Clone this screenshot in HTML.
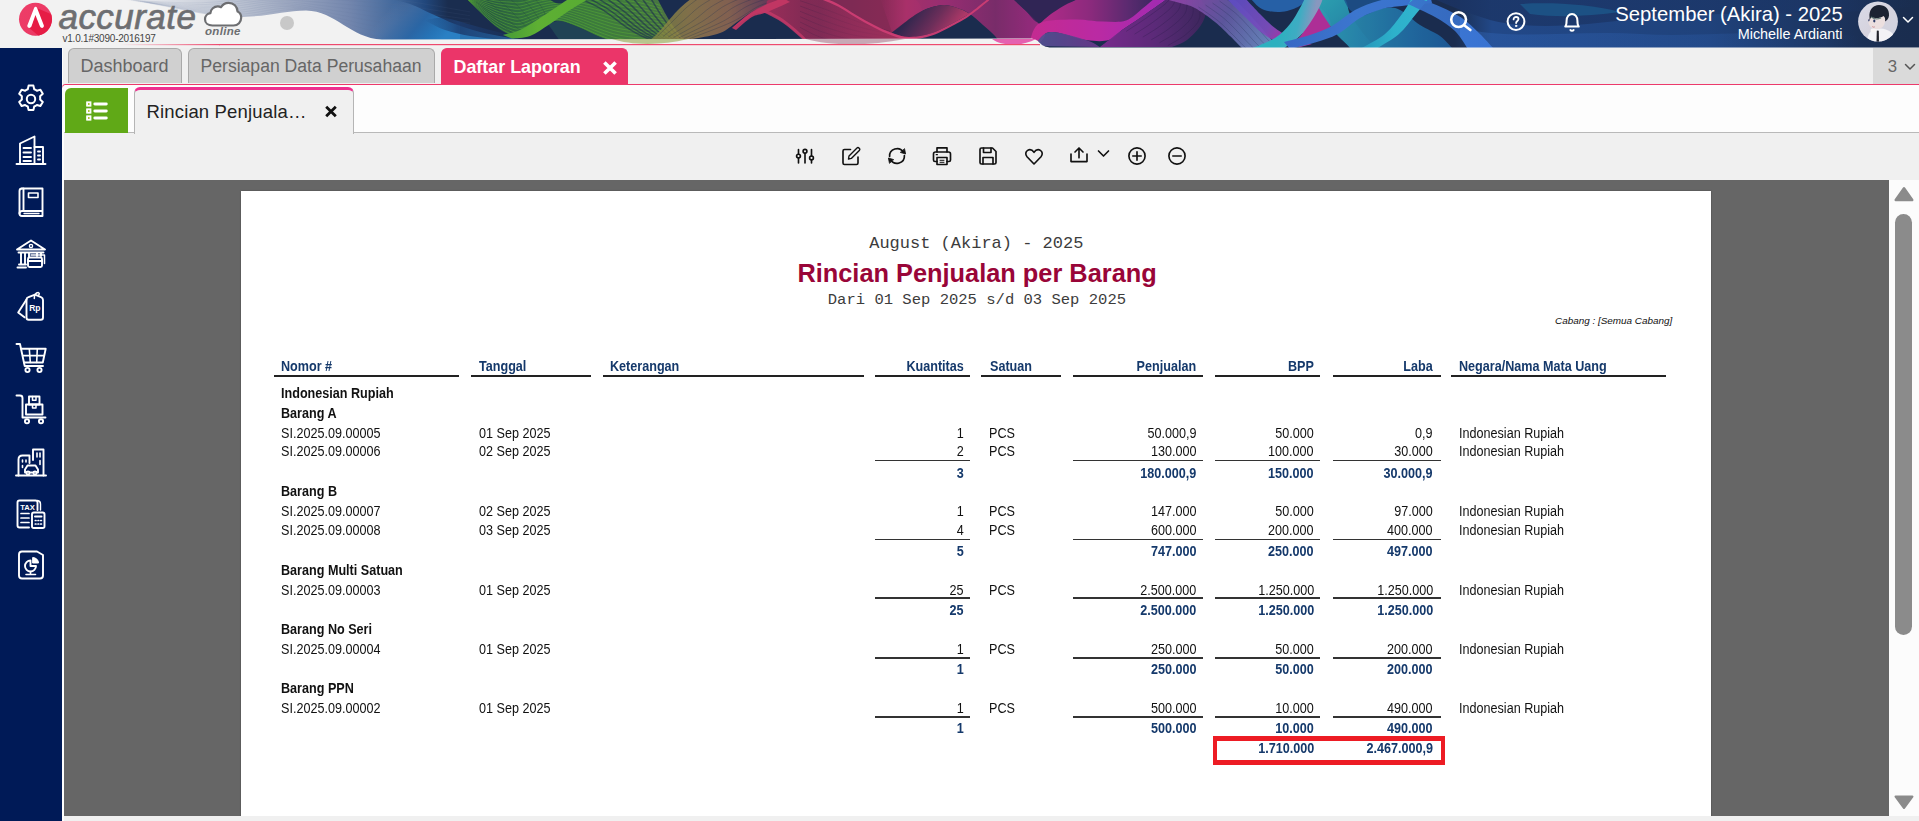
<!DOCTYPE html>
<html lang="id">
<head>
<meta charset="utf-8">
<title>Accurate Online - Rincian Penjualan per Barang</title>
<style>
*{box-sizing:border-box;margin:0;padding:0}
html,body{width:1919px;height:821px;overflow:hidden;background:#f0f0f0;font-family:"Liberation Sans",sans-serif}
.abs{position:absolute}
#hdr{position:absolute;left:0;top:0;width:1919px;height:48px;background:#f0f0f0;overflow:hidden}
#side{position:absolute;left:0;top:48px;width:62px;height:773px;background:#001a57}
#side svg{position:absolute;left:15px;width:32px;height:32px;fill:none;stroke:#fff;stroke-width:1.9;stroke-linecap:round;stroke-linejoin:round}
#tabs{position:absolute;left:63px;top:48px;width:1856px;height:37px;background:#f0f0f0}
.tab{position:absolute;top:0;height:35px;border:1px solid #a9a9a9;border-bottom:none;border-radius:6px 6px 0 0;background:#d0d0d0;color:#666;font-size:18px;line-height:35px;white-space:nowrap}
.tab.act{height:36px;line-height:37.200px;background:#eb3569;border-color:#eb3569;color:#fff;font-weight:bold}
#content{position:absolute;left:62px;top:48px;width:1857px;height:773px;background:#fdfdfd}
#pinkline{position:absolute;left:62px;top:84px;width:1857px;height:4px;border-top:1.300px solid #ec3a6b;border-left:1.300px solid #ec3a6b;border-radius:3px 0 0 0;-webkit-mask-image:linear-gradient(#000 30%,transparent);mask-image:linear-gradient(#000 30%,transparent)}
#gbtn{position:absolute;left:64.600px;top:87.700px;width:63.700px;height:44.900px;z-index:2;background:#60a917;border-radius:6px 0 0 0}
#subtab{position:absolute;left:134px;top:87px;width:220px;height:47px;z-index:2;background:#f0f0f0;border:1px solid #b5b5b5;border-bottom:none;border-top:3px solid #ee2f8f;border-radius:6px 6px 0 0;font-size:18.500px;letter-spacing:0.160px;color:#222;white-space:nowrap}
#tool{position:absolute;left:64px;top:132px;width:1855px;height:48px;background:#f0f0f0;border-top:1px solid #b9b9b9}
#tool svg{position:absolute;top:12px;width:22px;height:22px;fill:none;stroke:#111;stroke-width:1.650;stroke-linecap:round;stroke-linejoin:round}
#viewer{position:absolute;left:64px;top:180px;width:1825px;height:636px;background:#666;overflow:hidden}
#page{position:absolute;left:177.400px;top:11.100px;width:1470px;height:700px;background:#fff;box-shadow:0 0 1.500px rgba(0,0,0,.35)}
#sbar{position:absolute;left:1889px;top:180px;width:30px;height:636px;background:#fcfcfc}
#foot{position:absolute;left:64px;top:816px;width:1855px;height:5px;background:#f0f0f0}
#rep{position:absolute;left:0;top:0;width:1919px;height:816px;overflow:hidden;pointer-events:none}
.t{position:absolute;white-space:pre;font-size:14px;line-height:16px;color:#111;transform:scaleX(.9);transform-origin:0 0}
.t.rr{transform-origin:100% 0}
.t.nc{transform:none}
.b{font-weight:bold}
.n{color:#15396b}
.r{text-align:right}
.ln{position:absolute;height:1.4px;background:#222}
</style>
</head>
<body>
<div id="hdr">
<svg id="banner" class="abs" style="left:0;top:0" width="1919" height="48" viewBox="0 0 1919 48"><defs><linearGradient id="g1" gradientUnits="userSpaceOnUse" x1="120" y1="0" x2="448" y2="0"><stop offset="0" stop-color="#f0f0f0"/><stop offset="0.08" stop-color="#e6e8ed"/><stop offset="0.3" stop-color="#c6ccd8"/><stop offset="0.52" stop-color="#9ca7c0"/><stop offset="0.7" stop-color="#7386ad"/><stop offset="0.84" stop-color="#41689c"/><stop offset="0.93" stop-color="#21477c"/><stop offset="1" stop-color="#1a2d4f"/></linearGradient><linearGradient id="g2" gradientUnits="userSpaceOnUse" x1="395" y1="2" x2="440" y2="42"><stop offset="0" stop-color="#5f7fae" stop-opacity="0"/><stop offset="0.3" stop-color="#3f6ea6" stop-opacity="0.8"/><stop offset="0.55" stop-color="#2a68a8" stop-opacity="0.9"/><stop offset="0.8" stop-color="#2676ba" stop-opacity="0.95"/><stop offset="1" stop-color="#2a80c4"/></linearGradient><linearGradient id="g3" gradientUnits="userSpaceOnUse" x1="425" y1="0" x2="535" y2="0"><stop offset="0" stop-color="#1d3f74" stop-opacity="0"/><stop offset="0.3" stop-color="#1d3f74" stop-opacity="0.85"/><stop offset="1" stop-color="#1b3462" stop-opacity="0.2"/></linearGradient><linearGradient id="g4" gradientUnits="userSpaceOnUse" x1="466" y1="0" x2="690" y2="0"><stop offset="0" stop-color="#28603f"/><stop offset="0.28" stop-color="#3b8a38"/><stop offset="0.6" stop-color="#4a9a36"/><stop offset="0.85" stop-color="#56923c"/><stop offset="1" stop-color="#848c42"/></linearGradient><linearGradient id="g5" gradientUnits="userSpaceOnUse" x1="503" y1="0" x2="590" y2="0"><stop offset="0" stop-color="#4fae34"/><stop offset="0.4" stop-color="#69c52f"/><stop offset="1" stop-color="#63c22f"/></linearGradient><linearGradient id="g6" gradientUnits="userSpaceOnUse" x1="645" y1="0" x2="790" y2="0"><stop offset="0" stop-color="#8a9a3a"/><stop offset="0.3" stop-color="#b39248"/><stop offset="0.58" stop-color="#b57a52"/><stop offset="0.82" stop-color="#8a4a5e"/><stop offset="1" stop-color="#a83259"/></linearGradient><linearGradient id="g7" gradientUnits="userSpaceOnUse" x1="732" y1="0" x2="910" y2="0"><stop offset="0" stop-color="#d83462"/><stop offset="0.18" stop-color="#b82f5c"/><stop offset="0.5" stop-color="#8e2a55"/><stop offset="1" stop-color="#a32a58"/></linearGradient><linearGradient id="g8" gradientUnits="userSpaceOnUse" x1="806" y1="0" x2="905" y2="0"><stop offset="0" stop-color="#b2305f" stop-opacity="0"/><stop offset="0.45" stop-color="#b2305f" stop-opacity="0.55"/><stop offset="1" stop-color="#b8325f" stop-opacity="0.95"/></linearGradient><linearGradient id="g9" gradientUnits="userSpaceOnUse" x1="880" y1="0" x2="1045" y2="0"><stop offset="0" stop-color="#c23270" stop-opacity="0"/><stop offset="0.16" stop-color="#c23270"/><stop offset="0.4" stop-color="#b32e7a"/><stop offset="0.7" stop-color="#8e2d70"/><stop offset="1" stop-color="#b82a8c"/></linearGradient><linearGradient id="g10" gradientUnits="userSpaceOnUse" x1="915" y1="8" x2="950" y2="34"><stop offset="0" stop-color="#33264e"/><stop offset="0.55" stop-color="#7a2f5c"/><stop offset="1" stop-color="#c53b6c"/></linearGradient><linearGradient id="g11" gradientUnits="userSpaceOnUse" x1="1040" y1="0" x2="1150" y2="0"><stop offset="0" stop-color="#d62a96"/><stop offset="0.45" stop-color="#a62a88"/><stop offset="0.8" stop-color="#6a2a78"/><stop offset="1" stop-color="#4a2868"/></linearGradient><linearGradient id="g12" gradientUnits="userSpaceOnUse" x1="1030" y1="0" x2="1168" y2="0"><stop offset="0" stop-color="#e02c9c"/><stop offset="0.5" stop-color="#d42ab2"/><stop offset="1" stop-color="#b52cc4"/></linearGradient><linearGradient id="g13" gradientUnits="userSpaceOnUse" x1="1034" y1="0" x2="1100" y2="0"><stop offset="0" stop-color="#5a5aa0"/><stop offset="1" stop-color="#7a3a98"/></linearGradient><linearGradient id="g14" gradientUnits="userSpaceOnUse" x1="1105" y1="0" x2="1205" y2="0"><stop offset="0" stop-color="#8a2a98"/><stop offset="0.5" stop-color="#6a2a82"/><stop offset="1" stop-color="#43265f"/></linearGradient><linearGradient id="g15" gradientUnits="userSpaceOnUse" x1="1180" y1="0" x2="1265" y2="46"><stop offset="0" stop-color="#a04cb8"/><stop offset="0.5" stop-color="#6f62b2"/><stop offset="1" stop-color="#7a9ad6"/></linearGradient><linearGradient id="g16" gradientUnits="userSpaceOnUse" x1="1235" y1="0" x2="1300" y2="44"><stop offset="0" stop-color="#6a52d4"/><stop offset="0.55" stop-color="#8a52cc"/><stop offset="0.85" stop-color="#d232b4"/><stop offset="1" stop-color="#e030ae"/></linearGradient><linearGradient id="g17" gradientUnits="userSpaceOnUse" x1="1325" y1="0" x2="1365" y2="46"><stop offset="0" stop-color="#2fb6c4"/><stop offset="1" stop-color="#2388b6"/></linearGradient><linearGradient id="g18" gradientUnits="userSpaceOnUse" x1="1335" y1="0" x2="1450" y2="0"><stop offset="0" stop-color="#2c9ebc"/><stop offset="0.6" stop-color="#2278b0"/><stop offset="1" stop-color="#1e62a4"/></linearGradient><linearGradient id="g19" gradientUnits="userSpaceOnUse" x1="1280" y1="30" x2="1310" y2="36"><stop offset="0" stop-color="#2fc6d2"/><stop offset="0.55" stop-color="#45c2d6"/><stop offset="1" stop-color="#9aaad2"/></linearGradient><linearGradient id="g20" gradientUnits="userSpaceOnUse" x1="1284" y1="0" x2="1430" y2="0"><stop offset="0" stop-color="#3c72d8"/><stop offset="0.5" stop-color="#4283e4"/><stop offset="1" stop-color="#3c7ce0"/></linearGradient><linearGradient id="g21" gradientUnits="userSpaceOnUse" x1="1360" y1="0" x2="1429" y2="0"><stop offset="0" stop-color="#2aa8cc"/><stop offset="0.5" stop-color="#30c8e0"/><stop offset="1" stop-color="#38cce4"/></linearGradient><linearGradient id="g22" gradientUnits="userSpaceOnUse" x1="1455" y1="0" x2="1919" y2="0"><stop offset="0" stop-color="#244f96" stop-opacity="0"/><stop offset="0.08" stop-color="#244f96" stop-opacity="0.8"/><stop offset="0.55" stop-color="#214888" stop-opacity="0.78"/><stop offset="0.8" stop-color="#1e3c70" stop-opacity="0.55"/><stop offset="1" stop-color="#1a2d4f" stop-opacity="0"/></linearGradient><linearGradient id="g23" gradientUnits="userSpaceOnUse" x1="1440" y1="0" x2="1919" y2="0"><stop offset="0" stop-color="#1b3566" stop-opacity="0.85"/><stop offset="0.7" stop-color="#1b3566" stop-opacity="0.7"/><stop offset="1" stop-color="#1b3566" stop-opacity="0"/></linearGradient><linearGradient id="g24" gradientUnits="userSpaceOnUse" x1="1470" y1="0" x2="1860" y2="0"><stop offset="0" stop-color="#3166b8" stop-opacity="0.4"/><stop offset="0.6" stop-color="#2d5eac" stop-opacity="0.3"/><stop offset="1" stop-color="#2d5eac" stop-opacity="0"/></linearGradient><linearGradient id="g25" gradientUnits="userSpaceOnUse" x1="1408" y1="0" x2="1494" y2="0"><stop offset="0" stop-color="#3f7fe0"/><stop offset="1" stop-color="#3a74d4"/></linearGradient><linearGradient id="g26" gradientUnits="userSpaceOnUse" x1="120" y1="0" x2="220" y2="0"><stop offset="0" stop-color="#ee4a6e" stop-opacity="0"/><stop offset="1" stop-color="#ee4a6e"/></linearGradient></defs>
<rect x="0" y="0" width="1919" height="48" fill="url(#g1)"/>
<path d="M131.1,0.2 C142.9,0.6 180.1,3.4 201.9,2.8 C223.8,2.3 240.7,-2.0 262.2,-3.2 C283.7,-4.4 308.1,-4.7 330.8,-4.1 C353.6,-3.5 375.7,-2.4 398.9,0.3 C422.1,2.9 458.1,10.0 470.0,11.9" fill="none" stroke="#5f6f98" stroke-width="0.6" opacity="0.18"/>
<path d="M133.3,0.5 C145.4,1.2 183.6,4.8 205.8,4.5 C228.1,4.2 245.6,-0.8 266.7,-1.6 C287.8,-2.4 310.8,-1.4 332.5,-0.3 C354.2,0.7 373.8,2.2 396.7,4.8 C419.6,7.5 457.8,13.9 470.0,15.7" fill="none" stroke="#5f6f98" stroke-width="0.6" opacity="0.18"/>
<path d="M135.6,0.8 C147.9,1.7 187.1,6.3 209.7,6.2 C232.3,6.0 250.4,0.5 271.1,0.0 C291.9,-0.4 313.6,1.9 334.2,3.4 C354.7,5.0 371.8,6.7 394.4,9.4 C417.1,12.1 457.4,17.8 470.0,19.4" fill="none" stroke="#5f6f98" stroke-width="0.6" opacity="0.18"/>
<path d="M137.8,1.2 C150.4,2.3 190.6,7.8 213.6,7.8 C236.6,7.9 255.2,1.7 275.6,1.6 C295.9,1.5 316.4,5.2 335.8,7.2 C355.3,9.3 369.9,11.3 392.2,13.9 C414.6,16.6 457.0,21.7 470.0,23.2" fill="none" stroke="#5f6f98" stroke-width="0.6" opacity="0.18"/>
<path d="M140.0,1.5 C152.9,2.8 194.2,9.2 217.5,9.5 C240.8,9.8 260.0,3.0 280.0,3.2 C300.0,3.5 319.2,8.5 337.5,11.0 C355.8,13.5 367.9,15.8 390.0,18.5 C412.1,21.2 456.7,25.6 470.0,27.0" fill="none" stroke="#5f6f98" stroke-width="0.6" opacity="0.18"/>
<path d="M142.2,1.8 C155.4,3.4 197.7,10.7 221.4,11.2 C245.1,11.7 264.8,4.3 284.4,4.9 C304.1,5.5 321.9,11.7 339.2,14.8 C356.4,17.8 366.0,20.4 387.8,23.1 C409.6,25.7 456.3,29.5 470.0,30.8" fill="none" stroke="#5f6f98" stroke-width="0.6" opacity="0.18"/>
<path d="M144.4,2.2 C157.9,3.9 201.2,12.1 225.3,12.8 C249.4,13.6 269.6,5.5 288.9,6.5 C308.1,7.4 324.7,15.0 340.8,18.6 C356.9,22.1 364.0,24.9 385.6,27.6 C407.1,30.3 455.9,33.4 470.0,34.6" fill="none" stroke="#5f6f98" stroke-width="0.6" opacity="0.18"/>
<path d="M146.7,2.5 C160.4,4.5 204.7,13.6 229.2,14.5 C253.6,15.4 274.4,6.8 293.3,8.1 C312.2,9.4 327.5,18.3 342.5,22.3 C357.5,26.3 362.1,29.5 383.3,32.2 C404.6,34.8 455.6,37.3 470.0,38.3" fill="none" stroke="#5f6f98" stroke-width="0.6" opacity="0.18"/>
<path d="M148.9,2.8 C162.9,5.1 208.2,15.0 233.1,16.2 C257.9,17.3 279.3,8.0 297.8,9.7 C316.3,11.4 330.3,21.6 344.2,26.1 C358.1,30.6 360.1,34.1 381.1,36.7 C402.1,39.4 455.2,41.2 470.0,42.1" fill="none" stroke="#5f6f98" stroke-width="0.6" opacity="0.18"/>
<path d="M385,-2 C389.2,-1.0 402.2,1.3 410.0,4.0 C417.8,6.7 424.5,10.7 432.0,14.0 C439.5,17.3 447.0,21.0 455.0,24.0 C463.0,27.0 471.7,29.8 480.0,32.0 C488.3,34.2 498.0,35.8 505.0,37.0 C512.0,38.2 519.2,39.1 522.0,39.5 L522,40.5 C515.0,40.6 493.7,40.9 480.0,41.0 C466.3,41.1 454.7,40.8 440.0,41.0 C425.3,41.2 403.3,43.2 392.0,42.0 C380.7,40.8 379.0,37.7 372.0,34.0 C365.0,30.3 353.7,22.3 350.0,20.0 Z" fill="url(#g2)"/>
<path d="M425,20 C428.3,19.7 437.8,17.3 445.0,18.0 C452.2,18.7 460.5,22.0 468.0,24.0 C475.5,26.0 482.2,28.0 490.0,30.0 C497.8,32.0 507.5,34.4 515.0,36.0 C522.5,37.6 531.7,38.9 535.0,39.5 L535,40.5 C532.5,40.4 525.8,40.2 520.0,40.0 C514.2,39.8 508.3,40.2 500.0,39.5 C491.7,38.8 479.2,37.6 470.0,36.0 C460.8,34.4 452.5,32.6 445.0,30.0 C437.5,27.4 428.3,22.1 425.0,20.5 Z" fill="url(#g3)"/>
<path d="M466,-2 C468.3,0.3 475.2,7.3 480.0,12.0 C484.8,16.7 490.0,22.2 495.0,26.0 C500.0,29.8 505.8,33.2 510.0,35.0 C514.2,36.8 515.8,37.8 520.0,37.0 C524.2,36.2 530.3,32.3 535.0,30.0 C539.7,27.7 543.8,24.5 548.0,23.0 C552.2,21.5 555.0,20.3 560.0,21.0 C565.0,21.7 571.3,24.3 578.0,27.0 C584.7,29.7 593.3,34.3 600.0,37.0 C606.7,39.7 611.3,41.5 618.0,43.0 C624.7,44.5 628.0,45.3 640.0,46.0 C652.0,46.7 681.7,46.8 690.0,47.0 L690,47 C688.3,45.0 683.5,39.5 680.0,35.0 C676.5,30.5 672.8,26.2 669.0,20.0 C665.2,13.8 659.0,1.7 657.0,-2.0 Z" fill="url(#g4)" opacity="0.85"/>
<path d="M466.0,-3.0 C468.3,-3.7 475.2,-6.4 480.0,-7.3 C484.8,-8.3 490.0,-8.3 495.0,-8.8 C500.0,-9.3 505.8,-10.2 510.0,-10.4 C514.2,-10.7 515.8,-10.0 520.0,-10.4 C524.2,-10.7 530.3,-12.1 535.0,-12.5 C539.7,-12.9 543.8,-12.7 548.0,-12.8 C552.2,-12.8 555.0,-13.2 560.0,-12.8 C565.0,-12.5 571.3,-11.4 578.0,-10.7 C584.7,-10.0 593.3,-9.5 600.0,-8.4 C606.7,-7.4 611.3,-5.7 618.0,-4.4 C624.7,-3.0 632.9,-2.0 640.0,-0.4 C647.1,1.2 657.0,4.5 660.4,5.4" fill="none" stroke="#66c62f" stroke-width="0.9" opacity="0.55"/>
<path d="M466.0,-2.9 C468.3,-3.4 475.2,-5.4 480.0,-6.0 C484.8,-6.6 490.0,-6.2 495.0,-6.4 C500.0,-6.6 505.8,-7.2 510.0,-7.3 C514.2,-7.4 515.8,-6.7 520.0,-7.1 C524.2,-7.5 530.3,-9.1 535.0,-9.6 C539.7,-10.1 543.8,-10.1 548.0,-10.3 C552.2,-10.4 555.0,-10.9 560.0,-10.5 C565.0,-10.1 571.3,-9.0 578.0,-8.1 C584.7,-7.2 593.3,-6.5 600.0,-5.3 C606.7,-4.1 611.3,-2.5 618.0,-1.1 C624.7,0.2 632.8,1.2 640.0,2.8 C647.2,4.4 657.7,7.4 661.2,8.3" fill="none" stroke="#66c62f" stroke-width="0.9" opacity="0.55"/>
<path d="M466.0,-2.8 C468.3,-3.1 475.2,-4.5 480.0,-4.7 C484.8,-4.9 490.0,-4.1 495.0,-4.0 C500.0,-3.9 505.8,-4.2 510.0,-4.2 C514.2,-4.1 515.8,-3.4 520.0,-3.8 C524.2,-4.3 530.3,-6.0 535.0,-6.7 C539.7,-7.3 543.8,-7.6 548.0,-7.8 C552.2,-8.1 555.0,-8.6 560.0,-8.2 C565.0,-7.8 571.3,-6.5 578.0,-5.5 C584.7,-4.5 593.3,-3.4 600.0,-2.2 C606.7,-0.9 611.3,0.8 618.0,2.2 C624.7,3.5 632.7,4.5 640.0,6.0 C647.3,7.5 658.3,10.3 662.0,11.2" fill="none" stroke="#66c62f" stroke-width="0.9" opacity="0.55"/>
<path d="M466.0,-2.8 C468.3,-2.9 475.2,-3.5 480.0,-3.3 C484.8,-3.1 490.0,-2.0 495.0,-1.6 C500.0,-1.2 505.8,-1.2 510.0,-1.0 C514.2,-0.9 515.8,-0.1 520.0,-0.6 C524.2,-1.0 530.3,-2.9 535.0,-3.7 C539.7,-4.5 543.8,-5.0 548.0,-5.4 C552.2,-5.7 555.0,-6.2 560.0,-5.8 C565.0,-5.4 571.3,-4.0 578.0,-2.9 C584.7,-1.8 593.3,-0.4 600.0,1.0 C606.7,2.4 611.3,4.1 618.0,5.4 C624.7,6.8 632.5,7.8 640.0,9.2 C647.5,10.6 659.0,13.2 662.8,14.0" fill="none" stroke="#66c62f" stroke-width="0.9" opacity="0.55"/>
<path d="M466.0,-2.7 C468.3,-2.6 475.2,-2.6 480.0,-2.0 C484.8,-1.4 490.0,0.1 495.0,0.8 C500.0,1.5 505.8,1.8 510.0,2.1 C514.2,2.4 515.8,3.2 520.0,2.7 C524.2,2.2 530.3,0.1 535.0,-0.8 C539.7,-1.7 543.8,-2.4 548.0,-2.9 C552.2,-3.3 555.0,-3.9 560.0,-3.5 C565.0,-3.1 571.3,-1.6 578.0,-0.3 C584.7,1.0 593.3,2.6 600.0,4.1 C606.7,5.6 611.3,7.3 618.0,8.7 C624.7,10.1 632.4,11.0 640.0,12.4 C647.6,13.8 659.7,16.1 663.6,16.9" fill="none" stroke="#66c62f" stroke-width="0.9" opacity="0.55"/>
<path d="M466.0,-2.6 C468.3,-2.3 475.2,-1.6 480.0,-0.7 C484.8,0.3 490.0,2.2 495.0,3.2 C500.0,4.2 505.8,4.8 510.0,5.2 C514.2,5.7 515.8,6.5 520.0,6.0 C524.2,5.5 530.3,3.2 535.0,2.1 C539.7,1.1 543.8,0.1 548.0,-0.4 C552.2,-1.0 555.0,-1.6 560.0,-1.2 C565.0,-0.7 571.3,0.9 578.0,2.3 C584.7,3.7 593.3,5.6 600.0,7.2 C606.7,8.8 611.3,10.6 618.0,12.0 C624.7,13.4 632.3,14.3 640.0,15.6 C647.7,16.9 660.3,19.1 664.4,19.8" fill="none" stroke="#66c62f" stroke-width="0.9" opacity="0.55"/>
<path d="M466.0,-2.6 C468.3,-2.0 475.2,-0.7 480.0,0.7 C484.8,2.0 490.0,4.3 495.0,5.6 C500.0,6.9 505.8,7.8 510.0,8.4 C514.2,9.0 515.8,9.8 520.0,9.2 C524.2,8.7 530.3,6.3 535.0,5.1 C539.7,3.9 543.8,2.7 548.0,2.0 C552.2,1.4 555.0,0.7 560.0,1.2 C565.0,1.6 571.3,3.4 578.0,4.9 C584.7,6.4 593.3,8.6 600.0,10.4 C606.7,12.1 611.3,13.8 618.0,15.2 C624.7,16.6 632.1,17.6 640.0,18.8 C647.9,20.0 661.0,22.0 665.2,22.6" fill="none" stroke="#66c62f" stroke-width="0.9" opacity="0.55"/>
<path d="M466.0,-2.5 C468.3,-1.8 475.2,0.2 480.0,2.0 C484.8,3.8 490.0,6.4 495.0,8.0 C500.0,9.6 505.8,10.8 510.0,11.5 C514.2,12.2 515.8,13.1 520.0,12.5 C524.2,11.9 530.3,9.3 535.0,8.0 C539.7,6.7 543.8,5.2 548.0,4.5 C552.2,3.8 555.0,3.0 560.0,3.5 C565.0,4.0 571.3,5.8 578.0,7.5 C584.7,9.2 593.3,11.7 600.0,13.5 C606.7,15.3 611.3,17.1 618.0,18.5 C624.7,19.9 632.0,20.8 640.0,22.0 C648.0,23.2 661.7,24.9 666.0,25.5" fill="none" stroke="#66c62f" stroke-width="0.9" opacity="0.55"/>
<path d="M466.0,-2.4 C468.3,-1.5 475.2,1.2 480.0,3.3 C484.8,5.5 490.0,8.5 495.0,10.4 C500.0,12.3 505.8,13.7 510.0,14.6 C514.2,15.5 515.8,16.4 520.0,15.8 C524.2,15.1 530.3,12.4 535.0,10.9 C539.7,9.5 543.8,7.8 548.0,7.0 C552.2,6.1 555.0,5.3 560.0,5.8 C565.0,6.4 571.3,8.3 578.0,10.1 C584.7,11.9 593.3,14.7 600.0,16.6 C606.7,18.6 611.3,20.3 618.0,21.8 C624.7,23.2 631.9,24.1 640.0,25.2 C648.1,26.3 662.3,27.8 666.8,28.4" fill="none" stroke="#66c62f" stroke-width="0.9" opacity="0.55"/>
<path d="M466.0,-2.4 C468.3,-1.2 475.2,2.1 480.0,4.7 C484.8,7.2 490.0,10.6 495.0,12.8 C500.0,15.0 505.8,16.7 510.0,17.8 C514.2,18.8 515.8,19.7 520.0,19.0 C524.2,18.4 530.3,15.5 535.0,13.9 C539.7,12.3 543.8,10.4 548.0,9.4 C552.2,8.5 555.0,7.6 560.0,8.2 C565.0,8.7 571.3,10.8 578.0,12.7 C584.7,14.6 593.3,17.7 600.0,19.8 C606.7,21.8 611.3,23.6 618.0,25.0 C624.7,26.5 631.7,27.4 640.0,28.4 C648.3,29.4 663.0,30.8 667.6,31.2" fill="none" stroke="#66c62f" stroke-width="0.9" opacity="0.55"/>
<path d="M466.0,-2.3 C468.3,-0.9 475.2,3.1 480.0,6.0 C484.8,8.9 490.0,12.7 495.0,15.2 C500.0,17.7 505.8,19.7 510.0,20.9 C514.2,22.1 515.8,23.0 520.0,22.3 C524.2,21.6 530.3,18.5 535.0,16.8 C539.7,15.1 543.8,12.9 548.0,11.9 C552.2,10.8 555.0,9.9 560.0,10.5 C565.0,11.1 571.3,13.2 578.0,15.3 C584.7,17.4 593.3,20.7 600.0,22.9 C606.7,25.1 611.3,26.8 618.0,28.3 C624.7,29.7 631.6,30.6 640.0,31.6 C648.4,32.6 663.7,33.7 668.4,34.1" fill="none" stroke="#66c62f" stroke-width="0.9" opacity="0.55"/>
<path d="M466.0,-2.2 C468.3,-0.6 475.2,4.0 480.0,7.3 C484.8,10.6 490.0,14.8 495.0,17.6 C500.0,20.4 505.8,22.7 510.0,24.0 C514.2,25.4 515.8,26.3 520.0,25.6 C524.2,24.9 530.3,21.6 535.0,19.7 C539.7,17.9 543.8,15.5 548.0,14.4 C552.2,13.2 555.0,12.2 560.0,12.8 C565.0,13.4 571.3,15.7 578.0,17.9 C584.7,20.1 593.3,23.8 600.0,26.0 C606.7,28.3 611.3,30.1 618.0,31.6 C624.7,33.0 631.5,33.9 640.0,34.8 C648.5,35.7 664.3,36.6 669.2,37.0" fill="none" stroke="#66c62f" stroke-width="0.9" opacity="0.55"/>
<path d="M466.0,-2.2 C468.3,-0.4 475.2,5.0 480.0,8.7 C484.8,12.4 490.0,16.9 495.0,20.0 C500.0,23.1 505.8,25.7 510.0,27.2 C514.2,28.6 515.8,29.6 520.0,28.8 C524.2,28.1 530.3,24.7 535.0,22.7 C539.7,20.7 543.8,18.1 548.0,16.8 C552.2,15.6 555.0,14.6 560.0,15.2 C565.0,15.8 571.3,18.2 578.0,20.5 C584.7,22.8 593.3,26.8 600.0,29.2 C606.7,31.6 611.3,33.4 618.0,34.8 C624.7,36.3 631.3,37.2 640.0,38.0 C648.7,38.8 665.0,39.5 670.0,39.8" fill="none" stroke="#66c62f" stroke-width="0.9" opacity="0.55"/>
<path d="M466.0,-2.1 C468.3,-0.1 475.2,5.9 480.0,10.0 C484.8,14.1 490.0,19.0 495.0,22.4 C500.0,25.8 505.8,28.7 510.0,30.3 C514.2,31.9 515.8,32.9 520.0,32.1 C524.2,31.3 530.3,27.7 535.0,25.6 C539.7,23.5 543.8,20.6 548.0,19.3 C552.2,18.0 555.0,16.9 560.0,17.5 C565.0,18.1 571.3,20.6 578.0,23.1 C584.7,25.6 593.3,29.8 600.0,32.3 C606.7,34.8 611.3,36.6 618.0,38.1 C624.7,39.6 631.2,40.4 640.0,41.2 C648.8,42.0 665.7,42.5 670.8,42.7" fill="none" stroke="#66c62f" stroke-width="0.9" opacity="0.55"/>
<path d="M466.0,-2.0 C468.3,0.2 475.2,6.9 480.0,11.3 C484.8,15.8 490.0,21.1 495.0,24.8 C500.0,28.5 505.8,31.7 510.0,33.4 C514.2,35.2 515.8,36.2 520.0,35.4 C524.2,34.5 530.3,30.8 535.0,28.5 C539.7,26.3 543.8,23.2 548.0,21.8 C552.2,20.3 555.0,19.2 560.0,19.8 C565.0,20.5 571.3,23.1 578.0,25.7 C584.7,28.3 593.3,32.8 600.0,35.4 C606.7,38.0 611.3,39.9 618.0,41.4 C624.7,42.9 631.1,43.7 640.0,44.4 C648.9,45.1 666.3,45.4 671.6,45.6" fill="none" stroke="#66c62f" stroke-width="0.9" opacity="0.55"/>
<path d="M548,24 C550.0,23.5 555.0,20.5 560.0,21.0 C565.0,21.5 571.3,24.3 578.0,27.0 C584.7,29.7 594.3,34.7 600.0,37.0 C605.7,39.3 610.0,40.3 612.0,41.0 L560,41 C558.0,38.2 550.0,26.8 548.0,24.0 Z" fill="#24505a" opacity="0.75"/>
<path d="M548,-2 C549.3,-1.2 553.0,2.2 556.0,3.0 C559.0,3.8 563.0,3.8 566.0,3.0 C569.0,2.2 572.7,-1.2 574.0,-2.0 Z" fill="#1a2d4f" opacity="0.9"/>
<path d="M579.4,-2.0 C583.5,0.1 595.6,5.3 603.6,10.3 C611.7,15.4 619.7,23.2 627.8,28.1 C635.8,33.1 641.5,37.0 651.9,40.0 C662.3,43.0 683.6,45.0 690.0,46.0" fill="none" stroke="#1a2d4f" stroke-width="1.5" opacity="0.6"/>
<path d="M588.3,-2.0 C592.1,0.2 603.3,5.9 610.8,11.0 C618.3,16.1 625.9,23.5 633.3,28.3 C640.8,33.2 646.2,37.1 655.7,40.0 C665.1,42.9 684.3,45.0 690.0,46.0" fill="none" stroke="#1a2d4f" stroke-width="1.5" opacity="0.6"/>
<path d="M597.2,-2.0 C600.7,0.3 611.1,6.6 618.1,11.7 C625.0,16.8 632.0,23.8 638.9,28.6 C645.8,33.3 650.9,37.1 659.4,40.0 C668.0,42.9 684.9,45.0 690.0,46.0" fill="none" stroke="#1a2d4f" stroke-width="1.5" opacity="0.6"/>
<path d="M606.1,-2.0 C609.3,0.4 618.9,7.2 625.3,12.3 C631.7,17.5 638.1,24.2 644.4,28.8 C650.8,33.4 655.6,37.1 663.2,40.0 C670.8,42.9 685.5,45.0 690.0,46.0" fill="none" stroke="#1a2d4f" stroke-width="1.5" opacity="0.6"/>
<path d="M615.0,-2.0 C617.9,0.5 626.7,7.8 632.5,13.0 C638.3,18.2 644.2,24.5 650.0,29.0 C655.8,33.5 660.3,37.2 667.0,40.0 C673.7,42.8 686.2,45.0 690.0,46.0" fill="none" stroke="#1a2d4f" stroke-width="1.5" opacity="0.6"/>
<path d="M623.9,-2.0 C626.5,0.6 634.4,8.5 639.7,13.7 C645.0,18.9 650.4,24.8 655.6,29.2 C660.7,33.6 665.0,37.2 670.8,40.0 C676.5,42.8 686.8,45.0 690.0,46.0" fill="none" stroke="#1a2d4f" stroke-width="1.5" opacity="0.6"/>
<path d="M632.8,-2.0 C635.1,0.7 642.2,9.1 646.9,14.3 C651.7,19.6 656.5,25.2 661.1,29.4 C665.7,33.7 669.7,37.2 674.6,40.0 C679.4,42.8 687.4,45.0 690.0,46.0" fill="none" stroke="#1a2d4f" stroke-width="1.5" opacity="0.6"/>
<path d="M641.7,-2.0 C643.8,0.8 650.0,9.7 654.2,15.0 C658.3,20.3 662.6,25.5 666.7,29.7 C670.7,33.8 674.4,37.3 678.3,40.0 C682.2,42.7 688.1,45.0 690.0,46.0" fill="none" stroke="#1a2d4f" stroke-width="1.5" opacity="0.6"/>
<path d="M650.6,-2.0 C652.4,0.9 657.8,10.4 661.4,15.7 C665.0,21.0 668.8,25.8 672.2,29.9 C675.7,33.9 679.1,37.3 682.1,40.0 C685.1,42.7 688.7,45.0 690.0,46.0" fill="none" stroke="#1a2d4f" stroke-width="1.5" opacity="0.6"/>
<path d="M475.8,1.7 C478.2,3.6 485.3,9.0 490.0,13.2 C494.7,17.3 499.3,23.1 504.0,26.5 C508.7,29.9 511.7,34.0 517.9,33.4 C524.1,32.8 534.2,27.2 541.3,22.8 C548.4,18.5 557.3,10.1 560.5,7.5" fill="none" stroke="#1f4a3a" stroke-width="0.8" opacity="0.35"/>
<path d="M487.5,1.0 C489.6,2.8 495.9,7.8 500.0,11.5 C504.1,15.2 508.0,20.4 512.0,23.5 C516.0,26.6 518.4,30.8 523.8,30.2 C529.1,29.8 537.7,24.5 544.0,20.5 C550.3,16.5 558.6,8.8 561.5,6.5" fill="none" stroke="#1f4a3a" stroke-width="0.8" opacity="0.35"/>
<path d="M499.2,0.3 C501.0,1.9 506.5,6.5 510.0,9.8 C513.5,13.2 516.7,17.6 520.0,20.5 C523.3,23.4 525.1,27.5 529.6,27.1 C534.0,26.7 541.2,21.8 546.7,18.2 C552.2,14.6 559.9,7.6 562.5,5.5" fill="none" stroke="#1f4a3a" stroke-width="0.8" opacity="0.35"/>
<path d="M510.8,-0.3 C512.4,1.1 517.1,5.2 520.0,8.2 C522.9,11.1 525.4,14.9 528.0,17.5 C530.6,20.1 531.9,24.2 535.4,23.9 C539.0,23.6 544.7,19.1 549.3,15.8 C554.0,12.6 561.1,6.4 563.5,4.5" fill="none" stroke="#1f4a3a" stroke-width="0.8" opacity="0.35"/>
<path d="M522.5,-1.0 C523.8,0.2 527.8,3.9 530.0,6.5 C532.2,9.1 534.1,12.1 536.0,14.5 C537.9,16.9 538.6,20.9 541.2,20.8 C543.9,20.6 548.1,16.4 552.0,13.5 C555.9,10.6 562.4,5.2 564.5,3.5" fill="none" stroke="#1f4a3a" stroke-width="0.8" opacity="0.35"/>
<path d="M534.2,-1.7 C535.1,-0.6 538.4,2.6 540.0,4.8 C541.6,7.0 542.8,9.4 544.0,11.5 C545.2,13.6 545.3,17.6 547.1,17.6 C548.9,17.5 551.6,13.7 554.7,11.2 C557.7,8.7 563.7,3.9 565.5,2.5" fill="none" stroke="#1f4a3a" stroke-width="0.8" opacity="0.35"/>
<path d="M503,35 C505.8,34.2 513.8,32.8 520.0,30.0 C526.2,27.2 533.7,22.0 540.0,18.0 C546.3,14.0 553.0,9.3 558.0,6.0 C563.0,2.7 568.0,-0.7 570.0,-2.0 L590,-2 C586.7,0.0 576.7,5.7 570.0,10.0 C563.3,14.3 556.7,19.7 550.0,24.0 C543.3,28.3 536.3,33.6 530.0,36.0 C523.7,38.4 515.0,38.1 512.0,38.5 Z" fill="url(#g5)"/>
<path d="M640,46 C642.5,44.3 650.2,40.3 655.0,36.0 C659.8,31.7 664.8,24.7 669.0,20.0 C673.2,15.3 676.2,11.7 680.0,8.0 C683.8,4.3 690.0,-0.3 692.0,-2.0 L790,-2 C788.0,-1.3 783.8,0.0 778.0,2.0 C772.2,4.0 761.8,6.7 755.0,10.0 C748.2,13.3 742.8,18.2 737.0,22.0 C731.2,25.8 727.5,30.2 720.0,33.0 C712.5,35.8 705.3,36.8 692.0,39.0 C678.7,41.2 648.7,44.8 640.0,46.0 Z" fill="url(#g6)" opacity="0.78"/>
<path d="M657.6,36.2 C660.3,33.5 669.1,24.9 673.9,20.1 C678.6,15.4 681.9,11.5 686.1,7.9 C690.3,4.2 696.8,-0.4 699.0,-2.0" fill="none" stroke="#1a2d4f" stroke-width="0.9" opacity="0.3"/>
<path d="M662.9,36.6 C666.4,33.9 677.7,25.3 683.6,20.4 C689.5,15.6 693.3,11.3 698.2,7.6 C703.1,3.8 710.5,-0.4 713.0,-2.0" fill="none" stroke="#1a2d4f" stroke-width="0.9" opacity="0.3"/>
<path d="M668.2,37.1 C672.4,34.3 686.3,25.7 693.3,20.7 C700.3,15.8 704.7,11.1 710.4,7.3 C716.0,3.5 724.2,-0.5 727.0,-2.0" fill="none" stroke="#1a2d4f" stroke-width="0.9" opacity="0.3"/>
<path d="M673.5,37.5 C678.4,34.8 694.8,26.1 703.0,21.0 C711.2,15.9 716.2,10.8 722.5,7.0 C728.8,3.2 737.9,-0.5 741.0,-2.0" fill="none" stroke="#1a2d4f" stroke-width="0.9" opacity="0.3"/>
<path d="M678.8,37.9 C684.4,35.2 703.4,26.5 712.7,21.3 C722.0,16.1 727.6,10.6 734.6,6.7 C741.7,2.8 751.6,-0.5 755.0,-2.0" fill="none" stroke="#1a2d4f" stroke-width="0.9" opacity="0.3"/>
<path d="M684.1,38.4 C690.5,35.6 712.0,26.9 722.4,21.6 C732.9,16.2 739.0,10.4 746.8,6.4 C754.5,2.5 765.3,-0.6 769.0,-2.0" fill="none" stroke="#1a2d4f" stroke-width="0.9" opacity="0.3"/>
<path d="M689.4,38.8 C696.5,36.0 720.5,27.3 732.1,21.9 C743.7,16.4 750.5,10.1 758.9,6.1 C767.4,2.2 779.0,-0.6 783.0,-2.0" fill="none" stroke="#1a2d4f" stroke-width="0.9" opacity="0.3"/>
<path d="M732,28 C734.2,26.7 741.2,22.3 745.0,20.0 C748.8,17.7 751.5,15.2 755.0,14.0 C758.5,12.8 761.3,11.7 766.0,13.0 C770.7,14.3 777.3,18.2 783.0,22.0 C788.7,25.8 795.2,31.8 800.0,36.0 C804.8,40.2 810.0,45.2 812.0,47.0 L912,47 C912.0,38.8 933.5,6.2 912.0,-2.0 C890.5,-10.2 807.5,-3.3 783.0,-2.0 C758.5,-0.7 770.5,3.3 765.0,6.0 C759.5,8.7 755.5,10.3 750.0,14.0 C744.5,17.7 735.0,25.7 732.0,28.0 Z" fill="url(#g7)" opacity="0.95"/>
<path d="M732,28 C735.0,25.5 744.5,16.8 750.0,13.0 C755.5,9.2 759.5,7.5 765.0,5.0 C770.5,2.5 780.0,-0.8 783.0,-2.0 L790,2 C786.0,3.8 772.3,10.0 766.0,12.5 C759.7,15.0 757.0,14.1 752.0,17.0 C747.0,19.9 738.7,27.8 736.0,30.0 Z" fill="#e23a68" opacity="0.9"/>
<path d="M760,10 C761.0,10.0 762.2,8.5 766.0,10.0 C769.8,11.5 777.3,15.2 783.0,19.0 C788.7,22.8 794.8,28.3 800.0,33.0 C805.2,37.7 811.7,44.7 814.0,47.0 L810,47 C808.3,45.3 804.5,41.0 800.0,37.0 C795.5,33.0 788.7,26.9 783.0,23.0 C777.3,19.1 769.8,15.2 766.0,13.5 C762.2,11.8 761.0,13.1 760.0,13.0 Z" fill="#dd3c6c" opacity="0.85"/>
<path d="M800.0,0.7 C804.9,2.3 819.3,7.1 829.2,10.7 C839.0,14.2 849.0,18.7 859.2,22.2 C869.3,25.6 884.9,29.8 890.0,31.3" fill="none" stroke="#5a2048" stroke-width="1" opacity="0.35"/>
<path d="M800.0,6.0 C804.6,7.7 817.9,12.6 827.5,16.0 C837.1,19.4 847.1,23.5 857.5,26.5 C867.9,29.5 884.6,32.8 890.0,34.0" fill="none" stroke="#5a2048" stroke-width="1" opacity="0.35"/>
<path d="M800.0,11.3 C804.3,13.0 816.5,18.1 825.8,21.3 C835.1,24.6 845.1,28.3 855.8,30.8 C866.5,33.4 884.3,35.7 890.0,36.7" fill="none" stroke="#5a2048" stroke-width="1" opacity="0.35"/>
<path d="M800.0,16.7 C804.0,18.3 815.1,23.6 824.2,26.7 C833.2,29.8 843.2,33.1 854.2,35.2 C865.1,37.3 884.0,38.6 890.0,39.3" fill="none" stroke="#5a2048" stroke-width="1" opacity="0.35"/>
<path d="M800.0,22.0 C803.8,23.7 813.8,29.1 822.5,32.0 C831.2,34.9 841.2,37.8 852.5,39.5 C863.8,41.2 883.8,41.6 890.0,42.0" fill="none" stroke="#5a2048" stroke-width="1" opacity="0.35"/>
<path d="M800.0,27.3 C803.5,29.0 812.4,34.6 820.8,37.3 C829.3,40.1 839.3,42.6 850.8,43.8 C862.4,45.1 883.5,44.5 890.0,44.7" fill="none" stroke="#5a2048" stroke-width="1" opacity="0.35"/>
<path d="M806,-10 C808.7,-8.8 816.7,-5.3 822.0,-3.0 C827.3,-0.7 832.3,1.0 838.0,4.0 C843.7,7.0 850.0,11.5 856.0,15.0 C862.0,18.5 868.0,22.0 874.0,25.0 C880.0,28.0 886.2,30.9 892.0,33.0 C897.8,35.1 906.2,36.8 909.0,37.5 L909,47 C891.8,47.0 823.2,47.0 806.0,47.0 Z" fill="url(#g8)"/>
<path d="M892,32 C896.7,28.7 911.5,16.5 920.0,12.0 C928.5,7.5 936.3,5.5 943.0,5.0 C949.7,4.5 955.5,7.5 960.0,9.0 C964.5,10.5 966.2,11.3 970.0,14.0 C973.8,16.7 978.8,21.3 983.0,25.0 C987.2,28.7 991.7,32.3 995.0,36.0 C998.3,39.7 1001.7,45.2 1003.0,47.0 L1036,47 C1037.5,45.0 1044.3,38.7 1045.0,35.0 C1045.7,31.3 1043.3,29.2 1040.0,25.0 C1036.7,20.8 1029.7,14.5 1025.0,10.0 C1020.3,5.5 1014.2,0.0 1012.0,-2.0 L880,-2 C882.0,3.7 890.0,26.3 892.0,32.0 Z" fill="url(#g9)" opacity="0.95"/>
<path d="M892,32.5 C896.7,29.1 911.5,16.6 920.0,12.0 C928.5,7.4 936.3,5.5 943.0,5.0 C949.7,4.5 955.5,7.5 960.0,9.0 C964.5,10.5 968.3,13.2 970.0,14.0 L970,13.5 C967.5,14.9 961.3,18.8 955.0,22.0 C948.7,25.2 939.7,30.5 932.0,33.0 C924.3,35.5 915.7,37.0 909.0,37.0 C902.3,37.0 894.8,33.7 892.0,33.0 Z" fill="url(#g10)"/>
<path d="M806,-10 C808.7,-8.8 816.7,-5.3 822.0,-3.0 C827.3,-0.7 832.3,1.0 838.0,4.0 C843.7,7.0 850.0,11.5 856.0,15.0 C862.0,18.5 868.0,22.0 874.0,25.0 C880.0,28.0 886.2,31.0 892.0,33.0 C897.8,35.0 902.3,37.0 909.0,37.0 C915.7,37.0 924.3,35.5 932.0,33.0 C939.7,30.5 948.7,25.3 955.0,22.0 C961.3,18.7 964.3,17.0 970.0,13.0 C975.7,9.0 985.8,0.5 989.0,-2.0 L989,0.6000000000000001 C985.8,3.1 975.7,11.6 970.0,15.6 C964.3,19.6 961.3,21.3 955.0,24.6 C948.7,27.9 939.7,33.1 932.0,35.6 C924.3,38.1 915.7,39.6 909.0,39.6 C902.3,39.6 897.8,37.6 892.0,35.6 C886.2,33.6 880.0,30.6 874.0,27.6 C868.0,24.6 862.0,21.1 856.0,17.6 C850.0,14.1 843.7,9.6 838.0,6.6 C832.3,3.6 827.3,1.9 822.0,-0.4 C816.7,-2.7 808.7,-6.2 806.0,-7.4 Z" fill="#ea4079" opacity="0.95"/>
<path d="M1012,-2 C1014.2,0.0 1020.3,5.8 1025.0,10.0 C1029.7,14.2 1034.2,23.2 1040.0,23.0 C1045.8,22.8 1053.7,13.2 1060.0,9.0 C1066.3,4.8 1075.0,-0.2 1078.0,-2.0 Z" fill="#3a2458" opacity="0.85"/>
<path d="M1030,44 C1031.7,40.7 1035.0,30.0 1040.0,24.0 C1045.0,18.0 1053.3,12.3 1060.0,8.0 C1066.7,3.7 1076.7,-0.3 1080.0,-2.0 L1155,-2 C1153.0,-0.3 1147.8,4.2 1143.0,8.0 C1138.2,11.8 1132.7,18.7 1126.0,21.0 C1119.3,23.3 1111.7,22.2 1103.0,22.0 C1094.3,21.8 1084.5,19.3 1074.0,20.0 C1063.5,20.7 1047.3,22.0 1040.0,26.0 C1032.7,30.0 1031.7,41.0 1030.0,44.0 Z" fill="url(#g11)" opacity="0.95"/>
<path d="M1030,40 C1031.7,37.2 1032.7,26.4 1040.0,23.0 C1047.3,19.6 1063.5,19.8 1074.0,19.5 C1084.5,19.2 1094.3,21.3 1103.0,21.5 C1111.7,21.7 1119.3,22.8 1126.0,20.5 C1132.7,18.2 1138.2,11.8 1143.0,8.0 C1147.8,4.2 1153.0,-0.3 1155.0,-2.0 L1168,-2 C1166.7,-1.0 1164.7,0.7 1160.0,4.0 C1155.3,7.3 1146.3,13.7 1140.0,18.0 C1133.7,22.3 1127.2,26.3 1122.0,30.0 C1116.8,33.7 1115.0,38.3 1109.0,40.0 C1103.0,41.7 1095.8,41.3 1086.0,40.0 C1076.2,38.7 1058.7,31.0 1050.0,32.0 C1041.3,33.0 1036.7,43.7 1034.0,46.0 Z" fill="url(#g12)"/>
<path d="M1034,46 C1036.7,43.7 1041.3,33.0 1050.0,32.0 C1058.7,31.0 1077.7,37.5 1086.0,40.0 C1094.3,42.5 1097.7,45.8 1100.0,47.0 Z" fill="url(#g13)" opacity="0.9"/>
<path d="M1100,47 C1101.5,45.8 1105.3,42.8 1109.0,40.0 C1112.7,37.2 1116.8,33.7 1122.0,30.0 C1127.2,26.3 1133.7,22.3 1140.0,18.0 C1146.3,13.7 1155.3,7.3 1160.0,4.0 C1164.7,0.7 1166.7,-1.0 1168.0,-2.0 L1200,-2 C1201.0,0.0 1205.8,5.5 1206.0,10.0 C1206.2,14.5 1204.2,20.0 1201.0,25.0 C1197.8,30.0 1191.8,36.3 1187.0,40.0 C1182.2,43.7 1174.5,45.8 1172.0,47.0 Z" fill="url(#g14)" opacity="0.95"/>
<path d="M1126.2,31.4 C1129.2,29.4 1137.9,23.8 1144.2,19.5 C1150.4,15.2 1159.2,8.9 1163.6,5.3 C1168.0,1.7 1169.5,-0.8 1170.7,-2.0" fill="none" stroke="#2a1a48" stroke-width="1" opacity="0.3"/>
<path d="M1134.5,34.2 C1137.5,32.3 1146.5,26.9 1152.5,22.5 C1158.5,18.1 1166.8,12.1 1170.8,8.0 C1174.7,3.9 1175.1,-0.3 1176.0,-2.0" fill="none" stroke="#2a1a48" stroke-width="1" opacity="0.3"/>
<path d="M1142.8,37.1 C1145.8,35.2 1155.0,29.9 1160.8,25.5 C1166.7,21.1 1174.5,15.2 1177.9,10.7 C1181.3,6.1 1180.8,0.1 1181.3,-2.0" fill="none" stroke="#2a1a48" stroke-width="1" opacity="0.3"/>
<path d="M1151.2,39.9 C1154.2,38.0 1163.5,32.9 1169.2,28.5 C1174.8,24.1 1182.2,18.4 1185.1,13.3 C1188.0,8.2 1186.4,0.6 1186.7,-2.0" fill="none" stroke="#2a1a48" stroke-width="1" opacity="0.3"/>
<path d="M1159.5,42.8 C1162.5,40.9 1172.0,36.0 1177.5,31.5 C1183.0,27.0 1189.8,21.6 1192.2,16.0 C1194.7,10.4 1192.0,1.0 1192.0,-2.0" fill="none" stroke="#2a1a48" stroke-width="1" opacity="0.3"/>
<path d="M1167.8,45.6 C1170.8,43.7 1180.6,39.0 1185.8,34.5 C1191.1,30.0 1197.5,24.7 1199.4,18.7 C1201.3,12.6 1197.7,1.4 1197.3,-2.0" fill="none" stroke="#2a1a48" stroke-width="1" opacity="0.3"/>
<path d="M1165,-2 C1170.0,-2.2 1184.2,-3.0 1195.0,-3.0 C1205.8,-3.0 1221.7,-4.2 1230.0,-2.0 C1238.3,0.2 1240.3,5.7 1245.0,10.0 C1249.7,14.3 1253.8,19.3 1258.0,24.0 C1262.2,28.7 1266.3,34.0 1270.0,38.0 C1273.7,42.0 1278.3,46.3 1280.0,48.0 L1242,48 C1241.0,47.0 1238.0,44.0 1236.0,42.0 C1234.0,40.0 1233.5,39.3 1230.0,36.0 C1226.5,32.7 1220.8,26.7 1215.0,22.0 C1209.2,17.3 1200.8,11.2 1195.0,8.0 C1189.2,4.8 1185.0,4.5 1180.0,3.0 C1175.0,1.5 1167.5,-0.3 1165.0,-1.0 Z" fill="url(#g15)" opacity="0.9"/>
<path d="M1226.5,-1.0 C1229.1,1.0 1237.2,6.8 1242.0,11.2 C1246.8,15.6 1251.1,20.7 1255.2,25.2 C1259.3,29.7 1263.1,34.6 1266.6,38.4 C1270.1,42.2 1274.6,46.4 1276.2,48.0" fill="none" stroke="#1a2d4f" stroke-width="1" opacity="0.25"/>
<path d="M1219.5,1.0 C1222.2,3.1 1231.0,9.2 1236.0,13.6 C1241.0,18.0 1245.6,23.3 1249.6,27.6 C1253.6,31.9 1256.6,35.8 1259.8,39.2 C1263.0,42.6 1267.1,46.5 1268.6,48.0" fill="none" stroke="#1a2d4f" stroke-width="1" opacity="0.25"/>
<path d="M1212.5,3.0 C1215.4,5.2 1224.8,11.5 1230.0,16.0 C1235.2,20.5 1240.2,26.0 1244.0,30.0 C1247.8,34.0 1250.2,37.0 1253.0,40.0 C1255.8,43.0 1259.7,46.7 1261.0,48.0" fill="none" stroke="#1a2d4f" stroke-width="1" opacity="0.25"/>
<path d="M1205.5,5.0 C1208.6,7.2 1218.5,13.8 1224.0,18.4 C1229.5,23.0 1234.7,28.7 1238.4,32.4 C1242.1,36.1 1243.7,38.2 1246.2,40.8 C1248.7,43.4 1252.2,46.8 1253.4,48.0" fill="none" stroke="#1a2d4f" stroke-width="1" opacity="0.25"/>
<path d="M1198.5,7.0 C1201.8,9.3 1212.3,16.2 1218.0,20.8 C1223.7,25.4 1229.2,31.3 1232.8,34.8 C1236.4,38.3 1237.2,39.4 1239.4,41.6 C1241.6,43.8 1244.7,46.9 1245.8,48.0" fill="none" stroke="#1a2d4f" stroke-width="1" opacity="0.25"/>
<path d="M1250,-2 C1252.0,-0.2 1257.0,6.7 1262.0,9.0 C1267.0,11.3 1274.0,12.3 1280.0,12.0 C1286.0,11.7 1293.3,9.3 1298.0,7.0 C1302.7,4.7 1306.3,-0.5 1308.0,-2.0 Z" fill="#2a70c0" opacity="0.9"/>
<path d="M1245,-2 C1247.5,0.7 1255.0,9.0 1260.0,14.0 C1265.0,19.0 1269.2,23.7 1275.0,28.0 C1280.8,32.3 1288.8,37.3 1295.0,40.0 C1301.2,42.7 1309.2,43.3 1312.0,44.0 L1300,47 C1296.7,46.3 1286.3,45.3 1280.0,43.0 C1273.7,40.7 1267.8,37.3 1262.0,33.0 C1256.2,28.7 1251.0,22.8 1245.0,17.0 C1239.0,11.2 1229.2,1.2 1226.0,-2.0 Z" fill="url(#g16)" opacity="0.95"/>
<path d="M1310,14 C1311.7,13.0 1316.5,6.3 1320.0,8.0 C1323.5,9.7 1330.7,19.2 1331.0,24.0 C1331.3,28.8 1327.2,33.5 1322.0,37.0 C1316.8,40.5 1305.3,43.7 1300.0,45.0 C1294.7,46.3 1289.7,46.8 1290.0,45.0 C1290.3,43.2 1298.7,39.2 1302.0,34.0 C1305.3,28.8 1308.7,17.3 1310.0,14.0 Z" fill="#cf2fa6" opacity="0.95"/>
<path d="M1315,-2 C1319.7,-2.0 1337.2,-4.7 1343.0,-2.0 C1348.8,0.7 1346.8,8.3 1350.0,14.0 C1353.2,19.7 1357.7,26.3 1362.0,32.0 C1366.3,37.7 1373.7,45.3 1376.0,48.0 L1352,48 C1349.7,46.0 1342.5,41.0 1338.0,36.0 C1333.5,31.0 1328.2,22.7 1325.0,18.0 C1321.8,13.3 1320.7,11.2 1319.0,8.0 C1317.3,4.8 1315.7,0.5 1315.0,-1.0 Z" fill="url(#g17)" opacity="0.95"/>
<path d="M1335,31 C1339.2,28.3 1351.7,18.8 1360.0,15.0 C1368.3,11.2 1378.3,8.8 1385.0,8.0 C1391.7,7.2 1394.2,7.2 1400.0,10.0 C1405.8,12.8 1413.3,20.7 1420.0,25.0 C1426.7,29.3 1434.7,32.2 1440.0,36.0 C1445.3,39.8 1450.0,46.0 1452.0,48.0 L1350,48 C1347.5,45.2 1337.5,33.8 1335.0,31.0 Z" fill="url(#g18)" opacity="0.95"/>
<path d="M1343,-2 C1344.2,0.0 1346.8,7.0 1350.0,10.0 C1353.2,13.0 1356.2,16.7 1362.0,16.0 C1367.8,15.3 1378.7,9.0 1385.0,6.0 C1391.3,3.0 1397.5,-0.7 1400.0,-2.0 Z" fill="#1d5a9a" opacity="0.8"/>
<path d="M1250,49 C1254.2,47.2 1268.3,42.2 1275.0,38.0 C1281.7,33.8 1285.8,29.0 1290.0,24.0 C1294.2,19.0 1297.5,12.3 1300.0,8.0 C1302.5,3.7 1304.2,-0.3 1305.0,-2.0 L1323,-2 C1322.5,-0.7 1321.8,2.3 1320.0,6.0 C1318.2,9.7 1315.3,15.0 1312.0,20.0 C1308.7,25.0 1304.8,31.2 1300.0,36.0 C1295.2,40.8 1285.8,46.8 1283.0,49.0 Z" fill="url(#g19)"/>
<path d="M1284,42 C1288.3,40.8 1302.0,37.7 1310.0,35.0 C1318.0,32.3 1324.5,30.2 1332.0,26.0 C1339.5,21.8 1347.3,14.2 1355.0,10.0 C1362.7,5.8 1370.5,3.2 1378.0,1.0 C1385.5,-1.2 1391.3,-2.0 1400.0,-3.0 C1408.7,-4.0 1425.0,-4.7 1430.0,-5.0 L1432,3 C1427.0,3.5 1410.3,5.0 1402.0,6.0 C1393.7,7.0 1389.0,7.0 1382.0,9.0 C1375.0,11.0 1367.3,13.8 1360.0,18.0 C1352.7,22.2 1345.5,29.9 1338.0,34.0 C1330.5,38.1 1323.0,40.0 1315.0,42.5 C1307.0,45.0 1294.2,47.9 1290.0,49.0 Z" fill="url(#g20)"/>
<path d="M1360,49 C1364.2,46.5 1378.0,39.8 1385.0,34.0 C1392.0,28.2 1397.5,20.0 1402.0,14.0 C1406.5,8.0 1410.3,0.7 1412.0,-2.0 L1429,-2 C1426.8,0.7 1421.0,8.0 1416.0,14.0 C1411.0,20.0 1405.7,28.2 1399.0,34.0 C1392.3,39.8 1379.8,46.5 1376.0,49.0 Z" fill="url(#g21)"/>
<rect x="1455" y="0" width="464" height="48" fill="url(#g22)"/>
<path d="M1432,-2 L1919,-2 L1919,6 C1820,18 1720,10 1640,18 C1580,26 1530,30 1490,20 C1470,14 1450,6 1432,-2 Z" fill="url(#g23)"/>
<path d="M1520,4 C1550,2 1590,4 1620,12 C1590,16 1560,18 1530,14 Z" fill="#1c6a9c" opacity="0.5"/>
<path d="M1470,30 C1520,40 1580,30 1640,34 C1700,38 1760,28 1860,36 L1860,48 L1470,48 Z" fill="url(#g24)"/>
<path d="M1416,-3 C1420.2,-1.3 1433.3,3.5 1441.0,7.0 C1448.7,10.5 1455.5,13.5 1462.0,18.0 C1468.5,22.5 1474.7,28.8 1480.0,34.0 C1485.3,39.2 1491.7,46.5 1494.0,49.0 L1468,49 C1465.8,46.0 1460.5,36.3 1455.0,31.0 C1449.5,25.7 1442.8,21.5 1435.0,17.0 C1427.2,12.5 1412.5,6.2 1408.0,4.0 Z" fill="url(#g25)" opacity="0.95"/>
<rect x="460" y="0" width="1000" height="48" fill="#1a2d4f" opacity="0.14"/>
<path d="M0,48 L0,0 L125,0 C170,6 205,17 238,17 C268,17 285,10.5 306,10.5 C336,11 350,38 382,39.6 L1030,38.4 C1041,38.4 1038,47.4 1052,47.4 L1919,47.4 L1919,48 Z" fill="#f2f2f2"/>
<path d="M612,39 C630,45 660,46 688,39 Z" fill="#8aa03c" opacity="0.55"/>
<path d="M992,39 C1002,46.5 1022,46.5 1036,39 Z" fill="#e0309a" opacity="0.75"/>
<path d="M806,39 C830,46 870,46 905,39 Z" fill="#8a3a5a" opacity="0.4"/>
<rect x="219" y="44" width="821" height="1.200" fill="#ee4a6e"/>
<rect x="120" y="44" width="100" height="1.200" fill="url(#g26)"/></svg>
<!-- logo -->
<svg class="abs" style="left:18px;top:2px" width="35" height="35" viewBox="0 0 35 35">
  <defs><clipPath id="lc"><circle cx="17.500" cy="17.300" r="16.500"/></clipPath>
  <linearGradient id="lg" x1="0" y1="0" x2="1" y2="1"><stop offset="0" stop-color="#ee3d68"/><stop offset="1" stop-color="#ea3863"/></linearGradient></defs>
  <circle cx="17.500" cy="17.300" r="16.500" fill="url(#lg)"/>
  <g clip-path="url(#lc)"><path d="M19.300,6.300 L35,13 L35,35 L22,35 L11.200,25.900 L13.400,24.600 L17.400,13.100 Z" fill="#e61c45"/><path d="M0,28 Q17,40 35,26 L35,35 L0,35 Z" fill="#c81436" opacity=".18"/></g>
  <path d="M17.570,4.800 Q18.600,4.800 19.200,6.200 L25.900,23.600 Q26.300,25.600 24.300,25.900 Q22.600,26 22,24.600 L17.400,13.100 L13.400,24.600 Q12.600,26 11,25.900 Q9,25.500 9.300,23.600 L16,6.200 Q16.600,4.800 17.570,4.800 Z" fill="#fff"/>
</svg>
<div class="abs" id="brand" style="left:58.500px;top:-5px;font-size:35px;line-height:44px;font-style:italic;color:#6d6e71;letter-spacing:0.450px;-webkit-text-stroke:0.700px #6d6e71;white-space:nowrap">accurate</div>
<div class="abs" style="left:62.500px;top:32.500px;font-size:10px;line-height:11px;color:#444;letter-spacing:-0.220px;white-space:nowrap">v1.0.1#3090-2016197</div>
<!-- cloud -->
<svg class="abs" style="left:203px;top:1px" width="40" height="27" viewBox="0 0 40 27">
  <path d="M9.5,24.5 C5,24.5 2,21.8 2,18.2 C2,15 4.3,12.6 7.4,12.2 C7.8,8.2 11,5.4 14.8,5.4 C16,5.4 17,5.7 18,6.2 C19.6,3.4 22.4,1.8 25.6,1.8 C30.6,1.8 34.4,5.6 34.6,10.6 C36.8,11.6 38.2,13.8 38.2,16.6 C38.2,21 35,24.5 30.5,24.5 Z" fill="#fff" stroke="#6d6e71" stroke-width="2.2" stroke-linejoin="round"/>
</svg>
<div class="abs" style="left:205px;top:25px;font-size:11.5px;line-height:12px;font-style:italic;font-weight:bold;color:#6d6e71;letter-spacing:0.3px">online</div>
<div class="abs" style="left:280px;top:16px;width:14px;height:14px;border-radius:50%;background:#c8c8c8"></div>
<!-- right icons -->
<svg class="abs" style="left:1448px;top:9px" width="26" height="24" viewBox="0 0 26 24" fill="none" stroke="#fff" stroke-width="2.6" stroke-linecap="round"><circle cx="10.6" cy="10.6" r="7.4"/><path d="M16.2,16.2 L22.4,21"/></svg>
<svg class="abs" style="left:1505px;top:11px" width="22" height="22" viewBox="0 0 22 22" fill="none" stroke="#fff" stroke-width="2" stroke-linecap="round" stroke-linejoin="round"><circle cx="11" cy="10.6" r="8.4"/><path d="M8.6,8.4 C8.6,6.9 9.7,6 11.1,6 C12.5,6 13.5,6.9 13.5,8.1 C13.5,9.9 11.1,10 11.1,12" stroke-width="1.8"/><circle cx="11.1" cy="14.9" r="0.7" fill="#fff" stroke-width="1"/></svg>
<svg class="abs" style="left:1561px;top:11px" width="22" height="23" viewBox="0 0 22 23" fill="none" stroke="#fff" stroke-width="2" stroke-linecap="round" stroke-linejoin="round"><path d="M4.2,15.6 C5.6,14.2 5.6,12.4 5.6,9.6 C5.6,5.8 8,3 11,3 C14,3 16.4,5.8 16.4,9.6 C16.4,12.4 16.4,14.2 17.8,15.6 Z"/><path d="M9.4,19 C10,20 12,20 12.6,19"/></svg>
<div class="abs" style="right:76.300px;top:1.800px;font-size:20.250px;line-height:24px;color:#fff;white-space:nowrap">September (Akira) - 2025</div>
<div class="abs" style="right:76.5px;top:25.5px;font-size:14.4px;line-height:17px;color:#fff;white-space:nowrap">Michelle Ardianti</div>
<!-- avatar -->
<svg class="abs" style="left:1857px;top:1px" width="42" height="42" viewBox="0 0 42 42">
  <defs><clipPath id="av"><circle cx="21" cy="20.500" r="19.900"/></clipPath>
  <linearGradient id="avg" x1="0" y1="0" x2="1" y2="1"><stop offset="0" stop-color="#d9dbe8"/><stop offset="0.5" stop-color="#d6d3de"/><stop offset="1" stop-color="#cfd3e0"/></linearGradient>
  <filter id="avb" x="-10%" y="-10%" width="120%" height="120%"><feGaussianBlur stdDeviation="0.600"/></filter></defs>
  <circle cx="21" cy="20.500" r="19.900" fill="url(#avg)"/>
  <g clip-path="url(#av)" filter="url(#avb)">
    <path d="M10,42 C10,33 14,28.500 20,27.500 C26,27 33,29 36,33 C38,36 38,40 38,42 Z" fill="#f3f2f6"/>
    <path d="M11.500,22 C11,17 13,14.500 17,14 L27,14.500 C29,17 28.500,21 27,24 C25.500,27 22,28.500 19,28 C15.500,27.500 12.500,26 11.500,22 Z" fill="#ecdfdf"/>
    <path d="M12.500,16.500 C11.500,9 16,4 22,4 C28,4 32.500,8 32,14.500 C31.800,17.500 30,19.500 28,20.500 C28.500,18 28,16 26.500,15 C23,17.500 17.500,17.500 14.500,16 C13.500,17 13,18.500 12.500,20 Z" fill="#1b2130"/>
    <path d="M14,15.500 C16,17.500 20,18.500 24,17" stroke="#3a5a58" stroke-width="1.200" fill="none" opacity=".7"/>
    <ellipse cx="17.300" cy="20" rx="1.100" ry="1.400" fill="#2c3a66"/><ellipse cx="11.800" cy="19.300" rx="0.700" ry="1.100" fill="#44507a"/>
    <path d="M15.300,25.600 Q16.500,26.600 17.800,25.900" stroke="#c98a90" stroke-width="1" fill="none"/>
    <path d="M19.800,29.500 L21.800,29.800 L22,41 L19.500,41 Z" fill="#23242c"/>
    <path d="M14,28 C16,27 18.500,27.500 19.500,29.500 C18,32 14.500,32 13.500,30 Z" fill="#f7f4f4"/>
  </g>
</svg>
<svg class="abs" style="left:1902px;top:15px" width="12" height="10" viewBox="0 0 12 10" fill="none" stroke="#fff" stroke-width="1.500" stroke-linecap="round" stroke-linejoin="round"><path d="M1.500,2.500 L6,7 L10.500,2.500"/></svg>
</div>
<div id="side">
<!-- gear -->
<svg style="top:35px" viewBox="0 0 32 32"><circle cx="16" cy="16" r="4.2" stroke-width="2"/><path stroke-width="2" d="M13.6,2.6 h4.8 l0.8,3.6 a10,10 0 0 1 2.7,1.55 l3.5,-1.1 l2.4,4.15 l-2.7,2.5 a10,10 0 0 1 0,3.1 l2.7,2.5 l-2.4,4.15 l-3.5,-1.1 a10,10 0 0 1 -2.7,1.55 l-0.8,3.6 h-4.8 l-0.8,-3.6 a10,10 0 0 1 -2.7,-1.55 l-3.5,1.1 l-2.4,-4.15 l2.7,-2.5 a10,10 0 0 1 0,-3.1 l-2.7,-2.5 l2.4,-4.15 l3.5,1.1 a10,10 0 0 1 2.7,-1.55 z"/></svg>
<!-- building -->
<svg style="top:86px" viewBox="0 0 32 32"><path d="M1.5,30 H30.5"/><path d="M5,30 V9.5 L19.5,2.5 V30"/><path d="M19.5,13 H28 V30"/><path d="M8.5,14 H16 M8.5,18.5 H16 M8.5,23 H16 M8.5,27 H16" stroke-width="1.9"/><path d="M23,17.5 H25 M23,21.5 H25 M23,25.5 H25" stroke-width="1.9"/></svg>
<!-- book -->
<svg style="top:138px" viewBox="0 0 32 32"><path d="M7,2.5 H27.5 V25 H7 Q4.5,25 4.5,27.5 Q4.5,30 7,30 H27.5 V25"/><path d="M4.5,27.5 V5 Q4.5,2.5 7,2.5"/><path d="M8.5,2.5 V25"/><rect x="13.5" y="7" width="9.5" height="4.5" stroke-width="1.6"/><path d="M9,27.5 H24" stroke-width="1.4"/></svg>
<!-- bank -->
<svg style="top:190px" viewBox="0 0 32 32"><path d="M2,11.5 L16,2.5 L30,11.5 Z"/><circle cx="16" cy="8" r="1.6" stroke-width="1.4"/><path d="M3.5,14.5 H28.5"/><path d="M6,15 V26 M10,15 V26 M14,15 V19 M22,15 V18 M26,15 V18"/><path d="M2.5,29.5 H11 M4,26.5 H11"/><rect x="13" y="19.5" width="14" height="9.5" rx="1.5"/><path d="M13,23 H27" stroke-width="2.2"/><path d="M16,17 H29.5 V25.5" stroke-width="1.5"/></svg>
<!-- price tag Rp -->
<svg style="top:242px" viewBox="0 0 32 32"><path d="M13.500,7.200 L20,4.600 L26,7.200 Q28,8 28,10 V27.500 Q28,29.800 25.800,29.800 H13.700 Q11.500,29.800 11.500,27.500 V9.500 Q11.500,7.900 13.500,7.200 Z"/><path d="M11.500,9.500 L3.200,22.500 L9.500,27.300"/><path d="M19.300,8.600 Q19.300,3 23.300,2.600 Q25.300,3.600 23.300,5.300" stroke-width="1.500"/><text x="19.800" y="21.300" font-family="Liberation Sans,sans-serif" font-size="8.500" font-weight="bold" fill="#fff" stroke="none" text-anchor="middle">Rp</text></svg>
<!-- cart -->
<svg style="top:294px" viewBox="0 0 32 32"><path d="M1.500,2 H5 L9.700,24 H28"/><path d="M6.200,6.700 H30.700 L27.800,20.500 H9"/><path d="M14.300,6.700 L15.300,20.500 M22.300,6.700 L21.700,20.500 M7.700,13.600 H29.200" stroke-width="1.600"/><circle cx="12.500" cy="28" r="2.100"/><circle cx="24.500" cy="28" r="2.100"/></svg>
<!-- trolley -->
<svg style="top:345px" viewBox="0 0 32 32"><path d="M1.5,2.5 H5 Q7.5,2.500 7.5,5 V24.5 H30.500"/><rect x="11" y="11.5" width="16.5" height="10"/><rect x="14" y="3.5" width="10.5" height="8"/><path d="M17.500,3.500 V7.200 H21 V3.500 M17.500,11.500 V15 H21 V11.500" stroke-width="1.5"/><circle cx="12" cy="28.300" r="2.1"/><circle cx="26" cy="28.300" r="2.1"/></svg>
<!-- buildings car -->
<svg style="top:398px" viewBox="0 0 32 32"><path d="M1,29.500 H31"/><path d="M3.500,29.500 V13.500 Q3.500,9.500 7.500,9.500 H14.500 V17"/><path d="M18,14 V3.500 H28.500 V29.500"/><path d="M7.500,14 V16 M11,14 V16 M7.500,19.500 V21.500 M22,7 V11 M25,7 V11 M25,14.500 V18.500" stroke-width="1.6"/><path d="M10,26.500 V23.500 L12.500,19.500 H20.500 L23,23.500 V26.500 Z" fill="#001a57"/><circle cx="13" cy="27" r="1.500" fill="#001a57"/><circle cx="20" cy="27" r="1.500" fill="#001a57"/></svg>
<!-- tax -->
<svg style="top:450px" viewBox="0 0 32 32"><path d="M14,29.500 H4.500 Q2.500,29.500 2.500,27.500 V4.500 Q2.500,2.500 4.500,2.500 H20.500 Q22.500,2.500 22.500,4.500 V12"/><path d="M22.500,2.500 Q25.500,3 25.500,6 V12" stroke-width="1.4"/><text x="12.500" y="11.500" font-family="Liberation Sans,sans-serif" font-size="7.600" font-weight="bold" fill="#fff" stroke="none" text-anchor="middle">TAX</text><path d="M6,15.500 H14 M6,20 H14 M6,24.500 H14" stroke-width="1.7"/><rect x="17" y="14.500" width="12.500" height="15.500" rx="1.800"/><path d="M20,18.500 H26.500" stroke-width="2"/><path d="M20.300,22.500 H21 M23,22.500 H23.700 M25.700,22.500 H26.400 M20.300,26 H21 M23,26 H23.700 M25.700,26 H26.400" stroke-width="1.700"/></svg>
<!-- report pie -->
<svg style="top:501px" viewBox="0 0 32 32"><path d="M7,2.500 H22 L28,6 V26.500 Q28,29.500 25,29.500 H7 Q4,29.500 4,26.500 V5.500 Q4,2.500 7,2.500 Z"/><path d="M15.500,11.500 A5.500,5.500 0 1 0 21,17 H15.500 Z"/><path d="M18,8.500 A5.500,5.500 0 0 1 23.500,14 H18 Z" fill="#fff" stroke-width="1"/><path d="M15.500,22.500 V24.500 M11,25.500 H20.500" stroke-width="1.600"/></svg>
</div>
<div id="content"></div>
<div id="tabs">
  <div class="tab" style="left:5px;width:114px;padding-left:11.500px">Dashboard</div>
  <div class="tab" style="left:125px;width:247px;padding-left:11.500px;font-size:17.600px">Persiapan Data Perusahaan</div>
  <div class="tab act" style="left:378px;width:187px;padding-left:11.500px;font-size:17.900px">Daftar Laporan</div>
  <svg class="abs" style="left:538.600px;top:11.500px" width="16" height="16" viewBox="0 0 16 16"><path d="M2.400,2.400 L13.600,13.600 M13.600,2.400 L2.400,13.600" stroke="#fff" stroke-width="3.600" stroke-linecap="butt"/></svg>
  <div class="abs" style="left:1810px;top:0;width:46px;height:36px;background:#dadada"></div>
  <div class="abs" style="left:1824.800px;top:9.400px;font-size:16.800px;line-height:20px;color:#666">3</div>
  <svg class="abs" style="left:1840.500px;top:13.500px" width="12" height="10" viewBox="0 0 12 10" fill="none" stroke="#555" stroke-width="1.500" stroke-linecap="round" stroke-linejoin="round"><path d="M1.500,2.500 L6,7 L10.500,2.500"/></svg>
</div>
<div id="pinkline"></div>
<div id="gbtn"><svg class="abs" style="left:20px;top:12.500px" width="24" height="22" viewBox="0 0 24 22" fill="none" stroke="#fff" stroke-linecap="round"><rect x="1.700" y="1.900" width="4.200" height="4.200" fill="#fff" stroke-width="1"/><rect x="1.700" y="8.900" width="4.200" height="4.200" fill="#fff" stroke-width="1"/><rect x="1.700" y="15.900" width="4.200" height="4.200" fill="#fff" stroke-width="1"/><rect x="3" y="3.200" width="1.600" height="1.600" fill="#9bb800" stroke="none"/><rect x="3" y="10.200" width="1.600" height="1.600" fill="#9bb800" stroke="none"/><rect x="3" y="17.200" width="1.600" height="1.600" fill="#9bb800" stroke="none"/><path d="M9.800,4 H21.300 M9.800,11 H21.300 M9.800,18 H21.300" stroke-width="2.900"/></svg></div>
<div id="subtab"><span class="abs" style="left:11.500px;top:9.700px;line-height:24px">Rincian Penjuala…</span>
<svg class="abs" style="left:188.500px;top:14.500px" width="14" height="13" viewBox="0 0 14 13"><path d="M2.200,1.700 L11.800,11.300 M11.800,1.700 L2.200,11.300" stroke="#111" stroke-width="2.800" stroke-linecap="butt"/></svg></div>
<div id="tool">
<!-- sliders -->
<svg style="left:730px" viewBox="0 0 22 22"><path d="M4.500,4.500 V9.200 M4.500,13 V18 M11,8.200 V18 M17.500,4.500 V11 M17.500,14.800 V18"/><circle cx="4.500" cy="11.100" r="1.900"/><circle cx="11" cy="6.300" r="1.900"/><circle cx="17.500" cy="12.900" r="1.900"/></svg>
<!-- edit -->
<svg style="left:775.500px" viewBox="0 0 22 22"><path d="M10.500,4.500 H4.500 Q3,4.500 3,6 V18 Q3,19.500 4.500,19.500 H16.500 Q18,19.500 18,18 V12"/><path d="M8.500,14 L9,11 L17,3 Q18,2 19.200,3.200 Q20.400,4.400 19.300,5.400 L11.300,13.400 Z" stroke-width="1.400"/></svg>
<!-- refresh -->
<svg style="left:821.500px" viewBox="0 0 22 22"><path d="M3.600,11.500 A7.400,7.400 0 0 1 17.300,7.200"/><path d="M18.400,10.500 A7.400,7.400 0 0 1 4.700,14.800"/><path d="M14.600,7.500 L19.600,9 L18.600,4 Z" fill="#111" stroke-width="0.800"/><path d="M7.400,14.500 L2.400,13 L3.400,18 Z" fill="#111" stroke-width="0.800"/></svg>
<!-- print -->
<svg style="left:867px" viewBox="0 0 22 22"><path d="M6,7 V2.800 H16 V7"/><path d="M6,16.500 H4 Q2.500,16.500 2.500,15 V9 Q2.500,7 4.500,7 H17.500 Q19.500,7 19.500,9 V15 Q19.500,16.500 18,16.500 H16"/><path d="M6,12.500 H16 V19.500 H6 Z"/><path d="M9,15.300 H13 M9,17.300 H13" stroke-width="1"/><path d="M5.200,9.700 H6.400" stroke-width="1.200"/></svg>
<!-- save -->
<svg style="left:913px" viewBox="0 0 22 22"><path d="M3,4.500 Q3,3 4.500,3 H15.500 L19,6.500 V17.500 Q19,19 17.500,19 H4.500 Q3,19 3,17.500 Z"/><path d="M6.500,3 V7.500 H14 V3"/><path d="M6,19 V12.500 H16 V19"/></svg>
<!-- heart -->
<svg style="left:959px" viewBox="0 0 22 22"><path d="M11,19 L4,11.700 C2.100,9.500 2.500,6.600 4.600,5.400 C6.700,4.200 9.300,5 11,7.300 C12.700,5 15.300,4.200 17.400,5.400 C19.500,6.600 19.900,9.500 18,11.700 Z"/></svg>
<!-- share/upload -->
<svg style="left:1004px" viewBox="0 0 22 22"><path d="M3,9 V16.600 H19 V9"/><path d="M11,12.800 V3.500 M7,7 L11,3 L15,7"/></svg>
<svg style="left:1032.500px;top:14px;width:13px;height:13px" viewBox="0 0 13 13"><path d="M1.500,4 L6.500,9 L11.500,4"/></svg>
<!-- plus -->
<svg style="left:1062px" viewBox="0 0 22 22"><circle cx="11" cy="11" r="8.100"/><path d="M6.800,11 H15.200 M11,6.800 V15.200"/></svg>
<!-- minus -->
<svg style="left:1101.800px" viewBox="0 0 22 22"><circle cx="11" cy="11" r="8.100"/><path d="M6.800,11 H15.200"/></svg>
</div>
<div id="viewer"><div id="page"></div></div>
<div id="sbar">
<svg class="abs" style="left:4px;top:6px" width="22" height="16" viewBox="0 0 22 16"><path d="M11,2.300 L19.300,14 H2.700 Z" fill="#8b8b8b" stroke="#8b8b8b" stroke-width="2.400" stroke-linejoin="round"/></svg>
<div class="abs" style="left:6px;top:33.500px;width:17px;height:421.500px;border-radius:8.500px;background:#8b8b8b"></div>
<svg class="abs" style="left:4px;top:614px" width="22" height="16" viewBox="0 0 22 16"><path d="M11,13.700 L19.300,2.600 H2.700 Z" fill="#8b8b8b" stroke="#8b8b8b" stroke-width="2.400" stroke-linejoin="round"/></svg>
</div>
<div id="foot"></div>
<div id="rep">
<div class="t nc" style="left:869.2px;top:233.77px;font-size:17.0px;line-height:20px;font-family:'Liberation Mono',monospace;color:#3c3c3c">August (Akira) - 2025</div>
<div class="t b nc" style="left:797.4px;top:257.51px;font-size:25.36px;line-height:30px;color:#990538">Rincian Penjualan per Barang</div>
<div class="t nc" style="left:827.8px;top:291.16px;font-size:15.54px;line-height:18px;font-family:'Liberation Mono',monospace;color:#3c3c3c">Dari 01 Sep 2025 s/d 03 Sep 2025</div>
<div class="t nc" style="right:246.7px;top:314.86px;font-size:9.92px;line-height:12px;font-style:italic;color:#111">Cabang : [Semua Cabang]</div>
<div class="t b n" style="left:281.0px;top:358.45px">Nomor #</div>
<div class="t b n" style="left:478.5px;top:358.45px">Tanggal</div>
<div class="t b n" style="left:610.0px;top:358.45px">Keterangan</div>
<div class="t b n rr" style="right:955.5px;top:358.45px">Kuantitas</div>
<div class="t b n" style="left:990.0px;top:358.45px">Satuan</div>
<div class="t b n rr" style="right:722.5px;top:358.45px">Penjualan</div>
<div class="t b n rr" style="right:605.0px;top:358.45px">BPP</div>
<div class="t b n rr" style="right:486.0px;top:358.45px">Laba</div>
<div class="t b n" style="left:1459.0px;top:358.45px">Negara/Nama Mata Uang</div>
<div class="ln" style="left:274px;top:375.12px;width:185px;height:1.45px"></div>
<div class="ln" style="left:471px;top:375.12px;width:120px;height:1.45px"></div>
<div class="ln" style="left:602.5px;top:375.12px;width:261.0px;height:1.45px"></div>
<div class="ln" style="left:875px;top:375.12px;width:95px;height:1.45px"></div>
<div class="ln" style="left:981px;top:375.12px;width:80px;height:1.45px"></div>
<div class="ln" style="left:1072.5px;top:375.12px;width:130.0px;height:1.45px"></div>
<div class="ln" style="left:1215px;top:375.12px;width:105px;height:1.45px"></div>
<div class="ln" style="left:1332.5px;top:375.12px;width:108.0px;height:1.45px"></div>
<div class="ln" style="left:1451px;top:375.12px;width:215px;height:1.45px"></div>
<div class="t b" style="left:281.0px;top:385.45px">Indonesian Rupiah</div>
<div class="t b" style="left:281.0px;top:405.45px">Barang A</div>
<div class="t " style="left:281.0px;top:425.45px">SI.2025.09.00005</div>
<div class="t " style="left:478.5px;top:425.45px">01 Sep 2025</div>
<div class="t rr" style="right:955.5px;top:425.45px">1</div>
<div class="t " style="left:989.0px;top:425.45px">PCS</div>
<div class="t rr" style="right:722.5px;top:425.45px">50.000,9</div>
<div class="t rr" style="right:605.0px;top:425.45px">50.000</div>
<div class="t rr" style="right:486.1px;top:425.45px">0,9</div>
<div class="t " style="left:1459.0px;top:425.45px">Indonesian Rupiah</div>
<div class="t " style="left:281.0px;top:443.45px">SI.2025.09.00006</div>
<div class="t " style="left:478.5px;top:443.45px">02 Sep 2025</div>
<div class="t rr" style="right:955.5px;top:443.45px">2</div>
<div class="t " style="left:989.0px;top:443.45px">PCS</div>
<div class="t rr" style="right:722.5px;top:443.45px">130.000</div>
<div class="t rr" style="right:605.0px;top:443.45px">100.000</div>
<div class="t rr" style="right:486.1px;top:443.45px">30.000</div>
<div class="t " style="left:1459.0px;top:443.45px">Indonesian Rupiah</div>
<div class="ln" style="left:875px;top:459.77px;width:95px;height:1.45px;background:#333"></div>
<div class="ln" style="left:1072.5px;top:459.77px;width:130.0px;height:1.45px;background:#333"></div>
<div class="ln" style="left:1215px;top:459.77px;width:105px;height:1.45px;background:#333"></div>
<div class="ln" style="left:1332.5px;top:459.77px;width:108.0px;height:1.45px;background:#333"></div>
<div class="t b n rr" style="right:955.5px;top:465.45px">3</div>
<div class="t b n rr" style="right:722.5px;top:465.45px">180.000,9</div>
<div class="t b n rr" style="right:605.0px;top:465.45px">150.000</div>
<div class="t b n rr" style="right:486.1px;top:465.45px">30.000,9</div>
<div class="t b" style="left:281.0px;top:483.45px">Barang B</div>
<div class="t " style="left:281.0px;top:503.45px">SI.2025.09.00007</div>
<div class="t " style="left:478.5px;top:503.45px">02 Sep 2025</div>
<div class="t rr" style="right:955.5px;top:503.45px">1</div>
<div class="t " style="left:989.0px;top:503.45px">PCS</div>
<div class="t rr" style="right:722.5px;top:503.45px">147.000</div>
<div class="t rr" style="right:605.0px;top:503.45px">50.000</div>
<div class="t rr" style="right:486.1px;top:503.45px">97.000</div>
<div class="t " style="left:1459.0px;top:503.45px">Indonesian Rupiah</div>
<div class="t " style="left:281.0px;top:522.45px">SI.2025.09.00008</div>
<div class="t " style="left:478.5px;top:522.45px">03 Sep 2025</div>
<div class="t rr" style="right:955.5px;top:522.45px">4</div>
<div class="t " style="left:989.0px;top:522.45px">PCS</div>
<div class="t rr" style="right:722.5px;top:522.45px">600.000</div>
<div class="t rr" style="right:605.0px;top:522.45px">200.000</div>
<div class="t rr" style="right:486.1px;top:522.45px">400.000</div>
<div class="t " style="left:1459.0px;top:522.45px">Indonesian Rupiah</div>
<div class="ln" style="left:875px;top:538.98px;width:95px;height:1.45px;background:#333"></div>
<div class="ln" style="left:1072.5px;top:538.98px;width:130.0px;height:1.45px;background:#333"></div>
<div class="ln" style="left:1215px;top:538.98px;width:105px;height:1.45px;background:#333"></div>
<div class="ln" style="left:1332.5px;top:538.98px;width:108.0px;height:1.45px;background:#333"></div>
<div class="t b n rr" style="right:955.5px;top:543.45px">5</div>
<div class="t b n rr" style="right:722.5px;top:543.45px">747.000</div>
<div class="t b n rr" style="right:605.0px;top:543.45px">250.000</div>
<div class="t b n rr" style="right:486.1px;top:543.45px">497.000</div>
<div class="t b" style="left:281.0px;top:562.45px">Barang Multi Satuan</div>
<div class="t " style="left:281.0px;top:582.45px">SI.2025.09.00003</div>
<div class="t " style="left:478.5px;top:582.45px">01 Sep 2025</div>
<div class="t rr" style="right:955.5px;top:582.45px">25</div>
<div class="t " style="left:989.0px;top:582.45px">PCS</div>
<div class="t rr" style="right:722.5px;top:582.45px">2.500.000</div>
<div class="t rr" style="right:605.0px;top:582.45px">1.250.000</div>
<div class="t rr" style="right:486.1px;top:582.45px">1.250.000</div>
<div class="t " style="left:1459.0px;top:582.45px">Indonesian Rupiah</div>
<div class="ln" style="left:875px;top:597.48px;width:95px;height:1.45px;background:#333"></div>
<div class="ln" style="left:1072.5px;top:597.48px;width:130.0px;height:1.45px;background:#333"></div>
<div class="ln" style="left:1215px;top:597.48px;width:105px;height:1.45px;background:#333"></div>
<div class="ln" style="left:1332.5px;top:597.48px;width:108.0px;height:1.45px;background:#333"></div>
<div class="t b n rr" style="right:955.5px;top:602.45px">25</div>
<div class="t b n rr" style="right:722.5px;top:602.45px">2.500.000</div>
<div class="t b n rr" style="right:605.0px;top:602.45px">1.250.000</div>
<div class="t b n rr" style="right:486.1px;top:602.45px">1.250.000</div>
<div class="t b" style="left:281.0px;top:621.35px">Barang No Seri</div>
<div class="t " style="left:281.0px;top:641.45px">SI.2025.09.00004</div>
<div class="t " style="left:478.5px;top:641.45px">01 Sep 2025</div>
<div class="t rr" style="right:955.5px;top:641.45px">1</div>
<div class="t " style="left:989.0px;top:641.45px">PCS</div>
<div class="t rr" style="right:722.5px;top:641.45px">250.000</div>
<div class="t rr" style="right:605.0px;top:641.45px">50.000</div>
<div class="t rr" style="right:486.1px;top:641.45px">200.000</div>
<div class="t " style="left:1459.0px;top:641.45px">Indonesian Rupiah</div>
<div class="ln" style="left:875px;top:657.27px;width:95px;height:1.45px;background:#333"></div>
<div class="ln" style="left:1072.5px;top:657.27px;width:130.0px;height:1.45px;background:#333"></div>
<div class="ln" style="left:1215px;top:657.27px;width:105px;height:1.45px;background:#333"></div>
<div class="ln" style="left:1332.5px;top:657.27px;width:108.0px;height:1.45px;background:#333"></div>
<div class="t b n rr" style="right:955.5px;top:661.45px">1</div>
<div class="t b n rr" style="right:722.5px;top:661.45px">250.000</div>
<div class="t b n rr" style="right:605.0px;top:661.45px">50.000</div>
<div class="t b n rr" style="right:486.1px;top:661.45px">200.000</div>
<div class="t b" style="left:281.0px;top:680.45px">Barang PPN</div>
<div class="t " style="left:281.0px;top:700.45px">SI.2025.09.00002</div>
<div class="t " style="left:478.5px;top:700.45px">01 Sep 2025</div>
<div class="t rr" style="right:955.5px;top:700.45px">1</div>
<div class="t " style="left:989.0px;top:700.45px">PCS</div>
<div class="t rr" style="right:722.5px;top:700.45px">500.000</div>
<div class="t rr" style="right:605.0px;top:700.45px">10.000</div>
<div class="t rr" style="right:486.1px;top:700.45px">490.000</div>
<div class="t " style="left:1459.0px;top:700.45px">Indonesian Rupiah</div>
<div class="ln" style="left:875px;top:716.17px;width:95px;height:1.45px;background:#333"></div>
<div class="ln" style="left:1072.5px;top:716.17px;width:130.0px;height:1.45px;background:#333"></div>
<div class="ln" style="left:1215px;top:716.17px;width:105px;height:1.45px;background:#333"></div>
<div class="ln" style="left:1332.5px;top:716.17px;width:108.0px;height:1.45px;background:#333"></div>
<div class="t b n rr" style="right:955.5px;top:720.45px">1</div>
<div class="t b n rr" style="right:722.5px;top:720.45px">500.000</div>
<div class="t b n rr" style="right:605.0px;top:720.45px">10.000</div>
<div class="t b n rr" style="right:486.1px;top:720.45px">490.000</div>
<div class="t b n rr" style="right:605.0px;top:740.45px">1.710.000</div>
<div class="t b n rr" style="right:486.1px;top:740.45px">2.467.000,9</div>
<div class="abs" style="left:1213px;top:736px;width:232px;height:29px;border:solid #ed1c24;border-width:5px 4.5px"></div>
</div>
</body>
</html>
